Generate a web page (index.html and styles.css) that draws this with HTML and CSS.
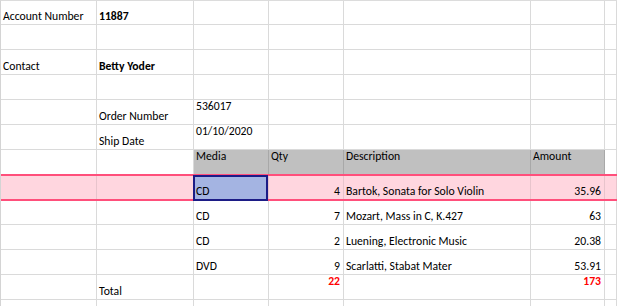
FILE: index.html
```html
<!DOCTYPE html>
<html>
<head>
<meta charset="utf-8">
<link rel="stylesheet" href="styles.css">
</head>
<body>
<div class="sheet">
  <div class="c">Account Number</div><div class="c b">11887</div><div class="c"></div><div class="c"></div><div class="c"></div><div class="c"></div><div class="c"></div>
  <div class="c"></div><div class="c"></div><div class="c"></div><div class="c"></div><div class="c"></div><div class="c"></div><div class="c"></div>
  <div class="c">Contact</div><div class="c b">Betty Yoder</div><div class="c"></div><div class="c"></div><div class="c"></div><div class="c"></div><div class="c"></div>
  <div class="c"></div><div class="c"></div><div class="c"></div><div class="c"></div><div class="c"></div><div class="c"></div><div class="c"></div>
  <div class="c"></div><div class="c">Order Number</div><div class="c top">536017</div><div class="c"></div><div class="c"></div><div class="c"></div><div class="c"></div>
  <div class="c"></div><div class="c">Ship Date</div><div class="c top">01/10/2020</div><div class="c"></div><div class="c"></div><div class="c"></div><div class="c"></div>
  <div class="c"></div><div class="c"></div><div class="c top hd">Media</div><div class="c top hd">Qty</div><div class="c top hd">Description</div><div class="c top hd">Amount</div><div class="c"></div>
  <div class="c hl"></div><div class="c hl"></div><div class="c hl sel">CD</div><div class="c hl r">4</div><div class="c hl">Bartok, Sonata for Solo Violin</div><div class="c hl r">35.96</div><div class="c hl"></div>
  <div class="c"></div><div class="c"></div><div class="c">CD</div><div class="c r">7</div><div class="c">Mozart, Mass in C, K.427</div><div class="c r">63</div><div class="c"></div>
  <div class="c"></div><div class="c"></div><div class="c">CD</div><div class="c r">2</div><div class="c">Luening, Electronic Music</div><div class="c r">20.38</div><div class="c"></div>
  <div class="c"></div><div class="c"></div><div class="c">DVD</div><div class="c r">9</div><div class="c">Scarlatti, Stabat Mater</div><div class="c r">53.91</div><div class="c"></div>
  <div class="c"></div><div class="c">Total</div><div class="c"></div><div class="c r top tot">22</div><div class="c"></div><div class="c r top tot">173</div><div class="c"></div>
  <div class="c"></div><div class="c"></div><div class="c"></div><div class="c"></div><div class="c"></div><div class="c"></div><div class="c"></div>
  <div class="band"></div>
</div>
</body>
</html>
```
FILE: styles.css
```css
html, body {
  margin: 0;
  padding: 0;
  background: #fff;
  overflow: hidden;
}
body {
  width: 617px;
  height: 306px;
}
.sheet {
  position: relative;
  display: grid;
  grid-template-columns: 96px 97px 75px 75px 187px 74px 1fr;
  grid-template-rows: 24px;
  grid-auto-rows: 25px;
  height: 306px;
  overflow: hidden;
  box-sizing: border-box;
  border-top: 1px solid #dcdcdc;
  border-left: 1px solid #d4d4d4;
  font-family: "Carlito", "Lato", sans-serif;
  font-size: 11.7px;
  line-height: 12px;
  color: #000;
}
.c {
  box-sizing: border-box;
  border-right: 1px solid #dadada;
  border-bottom: 1px solid #dadada;
  display: flex;
  align-items: flex-end;
  padding: 0 3px 2px 2px;
  white-space: nowrap;
}
.top {
  align-items: flex-start;
  padding-top: 0;
}
.r {
  justify-content: flex-end;
}
.b {
  font-weight: bold;
}
.tot {
  color: #ff0000;
  font-weight: bold;
}
.hd {
  background: #c0c0c0;
  border-right-color: #a8a8a8;
  border-bottom-color: #c0c0c0;
}
.hl {
  background: #ffd6df;
  border-right-color: #e8c4cc;
}
.sel {
  position: relative;
  background: #a4b4e2;
}
.sel::after {
  content: "";
  position: absolute;
  left: -1px;
  top: 0;
  right: 0;
  bottom: -2px;
  border: 2px solid #1c1c86;
  z-index: 3;
}
.band {
  position: absolute;
  left: -1px;
  right: 0;
  top: 173px;
  height: 27px;
  box-sizing: border-box;
  border-top: 2px solid #ff4f7b;
  border-bottom: 2px solid #ff4f7b;
  border-left: 1px solid #8a8a8a;
  z-index: 2;
  pointer-events: none;
}
```
